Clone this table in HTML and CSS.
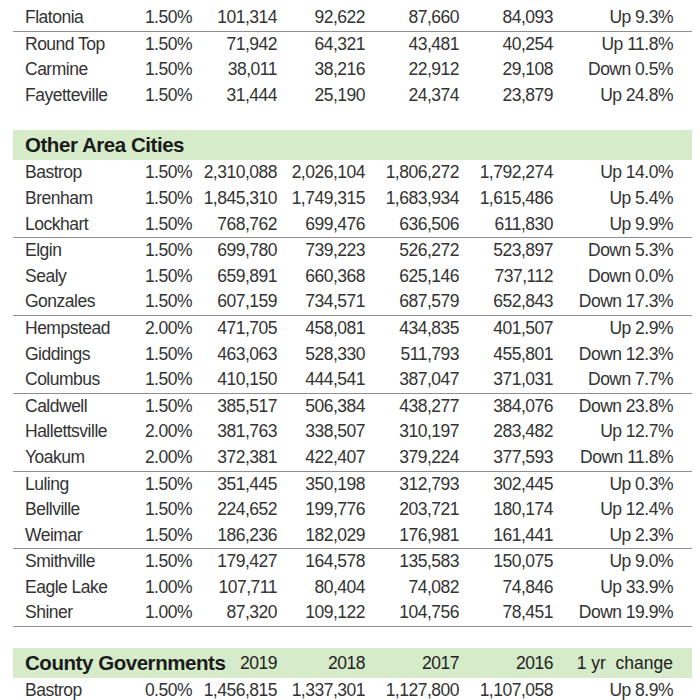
FILE: index.html
```html
<!DOCTYPE html>
<html lang="en">
<head>
  <meta charset="UTF-8">
  <meta name="viewport" content="width=device-width, initial-scale=1.0">
  <title>Sales Tax Rebates</title>
  <link rel="stylesheet" href="styles.css">
</head>
<body>
  <div class="sheet">
    <div class="group">
      <div class="row"><span class="name">Flatonia</span><span>1.50%</span><span>101,314</span><span>92,622</span><span>87,660</span><span>84,093</span><span>Up 9.3%</span></div>
    </div>
    <div class="group last">
      <div class="row"><span class="name">Round Top</span><span>1.50%</span><span>71,942</span><span>64,321</span><span>43,481</span><span>40,254</span><span>Up 11.8%</span></div>
      <div class="row"><span class="name">Carmine</span><span>1.50%</span><span>38,011</span><span>38,216</span><span>22,912</span><span>29,108</span><span>Down 0.5%</span></div>
      <div class="row"><span class="name">Fayetteville</span><span>1.50%</span><span>31,444</span><span>25,190</span><span>24,374</span><span>23,879</span><span>Up 24.8%</span></div>
    </div>

    <div class="head"><span class="title">Other Area Cities</span></div>
    <div class="group">
      <div class="row"><span class="name">Bastrop</span><span>1.50%</span><span>2,310,088</span><span>2,026,104</span><span>1,806,272</span><span>1,792,274</span><span>Up 14.0%</span></div>
      <div class="row"><span class="name">Brenham</span><span>1.50%</span><span>1,845,310</span><span>1,749,315</span><span>1,683,934</span><span>1,615,486</span><span>Up 5.4%</span></div>
      <div class="row"><span class="name">Lockhart</span><span>1.50%</span><span>768,762</span><span>699,476</span><span>636,506</span><span>611,830</span><span>Up 9.9%</span></div>
    </div>
    <div class="group">
      <div class="row"><span class="name">Elgin</span><span>1.50%</span><span>699,780</span><span>739,223</span><span>526,272</span><span>523,897</span><span>Down 5.3%</span></div>
      <div class="row"><span class="name">Sealy</span><span>1.50%</span><span>659,891</span><span>660,368</span><span>625,146</span><span>737,112</span><span>Down 0.0%</span></div>
      <div class="row"><span class="name">Gonzales</span><span>1.50%</span><span>607,159</span><span>734,571</span><span>687,579</span><span>652,843</span><span>Down 17.3%</span></div>
    </div>
    <div class="group">
      <div class="row"><span class="name">Hempstead</span><span>2.00%</span><span>471,705</span><span>458,081</span><span>434,835</span><span>401,507</span><span>Up 2.9%</span></div>
      <div class="row"><span class="name">Giddings</span><span>1.50%</span><span>463,063</span><span>528,330</span><span>511,793</span><span>455,801</span><span>Down 12.3%</span></div>
      <div class="row"><span class="name">Columbus</span><span>1.50%</span><span>410,150</span><span>444,541</span><span>387,047</span><span>371,031</span><span>Down 7.7%</span></div>
    </div>
    <div class="group">
      <div class="row"><span class="name">Caldwell</span><span>1.50%</span><span>385,517</span><span>506,384</span><span>438,277</span><span>384,076</span><span>Down 23.8%</span></div>
      <div class="row"><span class="name">Hallettsville</span><span>2.00%</span><span>381,763</span><span>338,507</span><span>310,197</span><span>283,482</span><span>Up 12.7%</span></div>
      <div class="row"><span class="name">Yoakum</span><span>2.00%</span><span>372,381</span><span>422,407</span><span>379,224</span><span>377,593</span><span>Down 11.8%</span></div>
    </div>
    <div class="group">
      <div class="row"><span class="name">Luling</span><span>1.50%</span><span>351,445</span><span>350,198</span><span>312,793</span><span>302,445</span><span>Up 0.3%</span></div>
      <div class="row"><span class="name">Bellville</span><span>1.50%</span><span>224,652</span><span>199,776</span><span>203,721</span><span>180,174</span><span>Up 12.4%</span></div>
      <div class="row"><span class="name">Weimar</span><span>1.50%</span><span>186,236</span><span>182,029</span><span>176,981</span><span>161,441</span><span>Up 2.3%</span></div>
    </div>
    <div class="group">
      <div class="row"><span class="name">Smithville</span><span>1.50%</span><span>179,427</span><span>164,578</span><span>135,583</span><span>150,075</span><span>Up 9.0%</span></div>
      <div class="row"><span class="name">Eagle Lake</span><span>1.00%</span><span>107,711</span><span>80,404</span><span>74,082</span><span>74,846</span><span>Up 33.9%</span></div>
      <div class="row"><span class="name">Shiner</span><span>1.00%</span><span>87,320</span><span>109,122</span><span>104,756</span><span>78,451</span><span>Down 19.9%</span></div>
    </div>

    <div class="head county"><span class="title">County Governments</span><span>2019</span><span>2018</span><span>2017</span><span>2016</span><span class="chg">1 yr  change</span></div>
    <div class="group last">
      <div class="row"><span class="name">Bastrop</span><span>0.50%</span><span>1,456,815</span><span>1,337,301</span><span>1,127,800</span><span>1,107,058</span><span>Up 8.9%</span></div>
    </div>
  </div>
</body>
</html>
```

FILE: styles.css
```css
body {
  margin: 0;
  padding: 0;
  background: #fff;
  color: #333;
  font-family: "Liberation Sans", Arial, sans-serif;
  font-size: 17.5px;
  letter-spacing: -0.5px;
}
.sheet {
  width: 679px;
  margin-left: 13px;
  padding-top: 5px;
}
.row,
.head {
  display: grid;
  grid-template-columns: 110px 57px 85px 88px 94px 94px 120px;
  padding: 0 19px 0 12px;
}
.row {
  height: 25.6px;
  line-height: 25.6px;
}
.row span,
.head span {
  text-align: right;
  white-space: pre;
}
.row .name {
  text-align: left;
}
.group {
  border-bottom: 1px solid #8f8f8f;
}
.group.last {
  border-bottom: none;
}
.head {
  background-color: #d6ebc9;
  height: 30px;
  line-height: 30px;
  margin-top: 22px;
  color: #222;
}
.head.county {
  margin-top: 21px;
}
.head .title {
  grid-column: span 2;
  text-align: left;
  font-weight: bold;
  font-size: 20.5px;
  letter-spacing: -0.45px;
  color: #1b1b1b;
}
.head .chg {
  letter-spacing: 0;
}
```
